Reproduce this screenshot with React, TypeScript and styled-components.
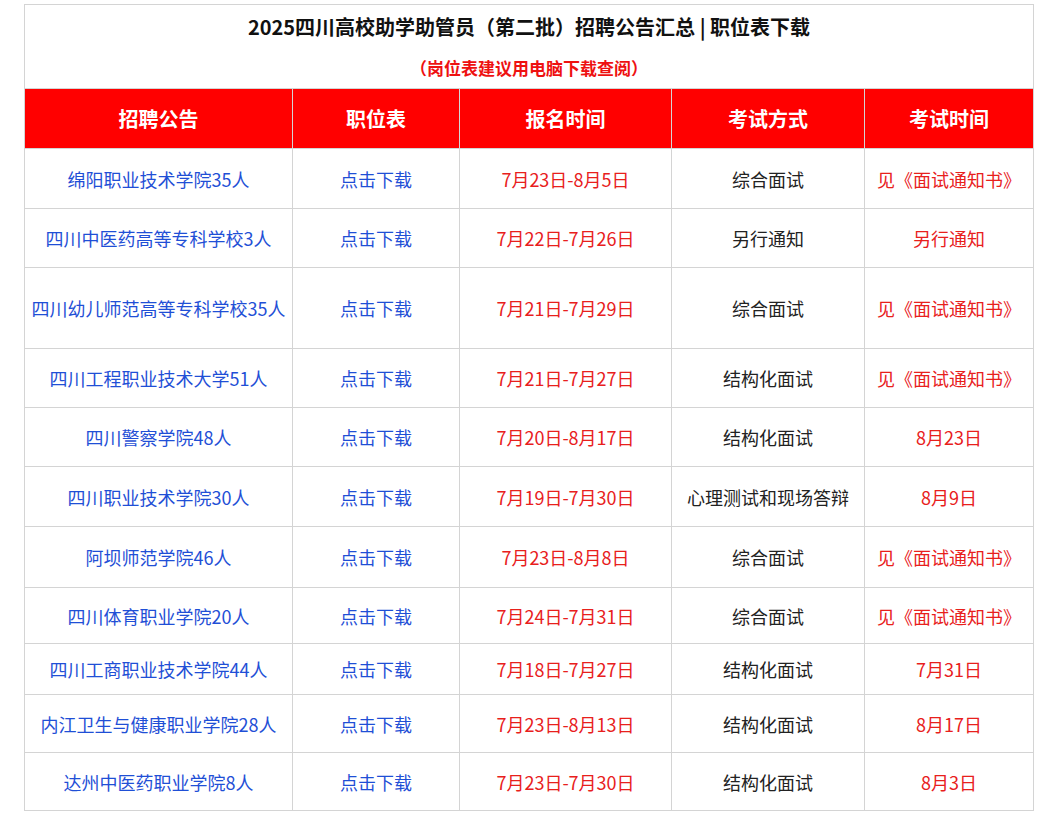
import styled, { createGlobalStyle } from 'styled-components';

const Global = createGlobalStyle`
  body { margin: 0; background: #fff; font-family: "Noto Sans CJK SC", "Noto Sans", sans-serif; }
`;

const Wrap = styled.div`
  padding: 4px 0 0 24px;
`;

const Table = styled.table`
  width: 1009px;
  border-collapse: collapse;
  table-layout: fixed;
  font-size: 18px;
  td, th { border: 1px solid #d4d4d4; text-align: center; padding: 0 6px; line-height: 40px; }
`;

const Title = styled.td`
  height: 43px;
  font-size: 20px;
  font-weight: 700;
  color: #111;
  border-bottom: none !important;
`;

const Sub = styled.td`
  height: 36px;
  font-size: 17px;
  font-weight: 700;
  color: #ee1111;
  border-top: none !important;
`;

const Head = styled.th`
  height: 59px;
  background: #ff0000;
  color: #fff;
  font-size: 20px;
  font-weight: 700;
`;

const Cell = styled.td<{ $c: 'blue' | 'red' | 'black'; $h: number }>`
  height: ${p => p.$h}px;
  color: ${p => (p.$c === 'blue' ? '#1f4fd6' : p.$c === 'red' ? '#e8201c' : '#222')};
`;

const rows: [string, string, string, string, number][] = [
  ['绵阳职业技术学院35人', '7月23日-8月5日', '综合面试', '见《面试通知书》', 59],
  ['四川中医药高等专科学校3人', '7月22日-7月26日', '另行通知', '另行通知', 58],
  ['四川幼儿师范高等专科学校35人', '7月21日-7月29日', '综合面试', '见《面试通知书》', 80],
  ['四川工程职业技术大学51人', '7月21日-7月27日', '结构化面试', '见《面试通知书》', 58],
  ['四川警察学院48人', '7月20日-8月17日', '结构化面试', '8月23日', 58],
  ['四川职业技术学院30人', '7月19日-7月30日', '心理测试和现场答辩', '8月9日', 59],
  ['阿坝师范学院46人', '7月23日-8月8日', '综合面试', '见《面试通知书》', 60],
  ['四川体育职业学院20人', '7月24日-7月31日', '综合面试', '见《面试通知书》', 55],
  ['四川工商职业技术学院44人', '7月18日-7月27日', '结构化面试', '7月31日', 50],
  ['内江卫生与健康职业学院28人', '7月23日-8月13日', '结构化面试', '8月17日', 57],
  ['达州中医药职业学院8人', '7月23日-7月30日', '结构化面试', '8月3日', 57],
];

export default function App() {
  return (
    <>
      <Global />
      <Wrap>
        <Table>
          <colgroup>
            <col style={{ width: 268 }} />
            <col style={{ width: 167 }} />
            <col style={{ width: 212 }} />
            <col style={{ width: 193 }} />
            <col style={{ width: 169 }} />
          </colgroup>
          <tbody>
            <tr><Title colSpan={5}>2025四川高校助学助管员（第二批）招聘公告汇总 | 职位表下载</Title></tr>
            <tr><Sub colSpan={5}>（岗位表建议用电脑下载查阅）</Sub></tr>
            <tr>
              <Head>招聘公告</Head><Head>职位表</Head><Head>报名时间</Head><Head>考试方式</Head><Head>考试时间</Head>
            </tr>
            {rows.map(r => (
              <tr key={r[0]}>
                <Cell $c="blue" $h={r[4]}>{r[0]}</Cell>
                <Cell $c="blue" $h={r[4]}>点击下载</Cell>
                <Cell $c="red" $h={r[4]}>{r[1]}</Cell>
                <Cell $c="black" $h={r[4]}>{r[2]}</Cell>
                <Cell $c="red" $h={r[4]}>{r[3]}</Cell>
              </tr>
            ))}
          </tbody>
        </Table>
      </Wrap>
    </>
  );
}
